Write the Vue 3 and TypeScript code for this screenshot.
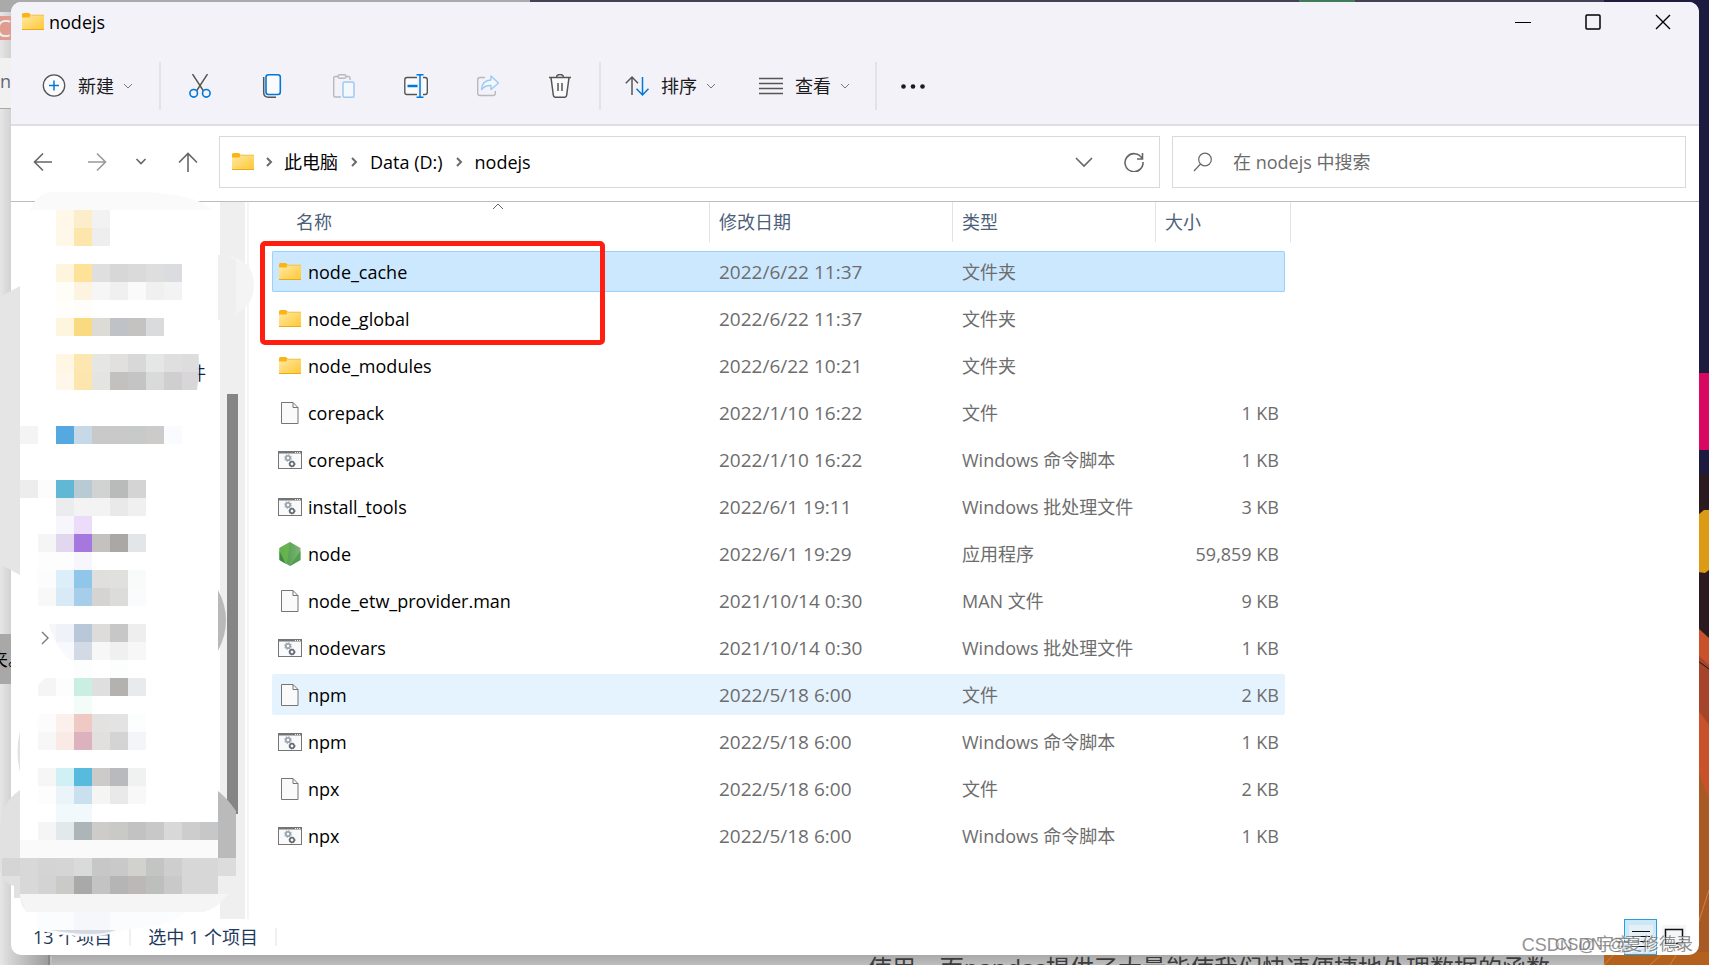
<script setup lang="ts">
import { ref } from 'vue'

type Kind = 'folder' | 'file' | 'script' | 'node'
interface Entry { name: string; date: string; type: string; size: string; kind: Kind; state?: 'selected' | 'hover' }

const entries: Entry[] = [
  { name: 'node_cache', date: '2022/6/22 11:37', type: '文件夹', size: '', kind: 'folder', state: 'selected' },
  { name: 'node_global', date: '2022/6/22 11:37', type: '文件夹', size: '', kind: 'folder' },
  { name: 'node_modules', date: '2022/6/22 10:21', type: '文件夹', size: '', kind: 'folder' },
  { name: 'corepack', date: '2022/1/10 16:22', type: '文件', size: '1 KB', kind: 'file' },
  { name: 'corepack', date: '2022/1/10 16:22', type: 'Windows 命令脚本', size: '1 KB', kind: 'script' },
  { name: 'install_tools', date: '2022/6/1 19:11', type: 'Windows 批处理文件', size: '3 KB', kind: 'script' },
  { name: 'node', date: '2022/6/1 19:29', type: '应用程序', size: '59,859 KB', kind: 'node' },
  { name: 'node_etw_provider.man', date: '2021/10/14 0:30', type: 'MAN 文件', size: '9 KB', kind: 'file' },
  { name: 'nodevars', date: '2021/10/14 0:30', type: 'Windows 批处理文件', size: '1 KB', kind: 'script' },
  { name: 'npm', date: '2022/5/18 6:00', type: '文件', size: '2 KB', kind: 'file', state: 'hover' },
  { name: 'npm', date: '2022/5/18 6:00', type: 'Windows 命令脚本', size: '1 KB', kind: 'script' },
  { name: 'npx', date: '2022/5/18 6:00', type: '文件', size: '2 KB', kind: 'file' },
  { name: 'npx', date: '2022/5/18 6:00', type: 'Windows 命令脚本', size: '1 KB', kind: 'script' },
]

const query = ref('')

// Censor mosaic: [top, left, colours of consecutive 18px cells]
const mosaicRows: [number, number, string][] = [
  [210, 56, 'fff8e8 fdeecb f2f2f2'],
  [228, 56, 'fff8e8 fde6ac eeeeee'],
  [264, 56, 'fff5de ffe29a dfdfdf d7d7d7 dadada dedede dadcdf'],
  [282, 56, 'fffdf7 fdf3e1 f6f6f6 f0f0f0 fafafa f0f0f0 f3f3f3'],
  [300, 56, 'fffefa fffdf9'],
  [318, 56, 'fef5df fada80 dcdbd6 bfc3c7 c4c3c1 dadbdd'],
  [426, 20, 'f4f4f4 ffffff 55a8e0 c7d9e6 c9c9c9 c9c9c9 c8cac9 cdcbc9 f9fbff'],
  [480, 20, 'ededed fcfcfc 61b8d4 b8cbd5 d1d3d2 b8bbba d4d4d4'],
  [498, 56, 'ebecee f3f3f3 f3f3f3 e9e9e9 f0f0f0'],
  [516, 56, 'f8f6fd ebdcf9'],
  [534, 38, 'f5f5f5 e1d7ef a678df c3c2c0 a9a8a6 e2e6e9'],
  [552, 38, 'fdfdfd fdfdfd f8f6fd'],
  [570, 38, 'fcfcfc dceef9 90c6e9 e0dfdd e0e0df f8fbfa'],
  [588, 38, 'f8f8f8 d8eaf6 a6cdea d6d4d2 dcdcda f9fbfd'],
  [660, 74, 'fcfefd ffffff fcfefd'],
  [696, 74, 'f4fcfa'],
  [714, 38, 'fcfcfc fcf0ec efc9c4 e3e2e1 e3e3e3 fbfefd'],
  [732, 38, 'f7f7f7 faeae6 ddb2bf e1e0de d4d4d4 f3f5f8'],
  [768, 38, 'f6f6f6 cff0f5 58badc cdcbc9 b9babd f0f2f1'],
  [786, 38, 'fdfdfd ebf5f9 cae0ee f5f5f3 e9e9e9 f8f8f8'],
  [804, 56, 'f2f9fd f2f9fd'],
  [822, 38, 'f5f5f5 e1e9ea aeb5b9 cecccb c9c9c7 c2c2c2 c8c8c8 d8d8d8 cdcdcd c6c7c9'],
  [840, 20, 'fafafa fafafa fafafa fafafa fafafa fafafa fafafa fafafa fafafa fafafa fafafa'],
  [858, 2, 'd5d5d5 d8d8d8 d4d4d4 d5d5d5 d8dbd9 c7c7c8 c9c9c9 d1d1ce c3c5c4 cecece d7d7d7 d7d7d7 dcdcdc'],
  [876, 20, 'd8d8d8 d3d3d3 cacbc9 a9a9a9 c3c3c3 b5b5b5 bbb8b6 bdbfbd c9c9c9 d7d7d7 d7d7d7'],
]
const clippedRows: [number, number, string][] = [
  [354, 56, 'fff6e3 fde7b1 e6e7e5 e1e0de d8d8d8 e4e7e6 dfdfe0 dddddd'],
  [372, 56, 'fff8ea fde6ae e4e4e3 c3c1bf c4c4c4 d8dbda cfcfcf d8d6d8'],
  [624, 38, 'f7f7f7 eff3f9 b9c8d9 dedcdb c7c7c7 eeeeee'],
  [642, 56, 'f8f9fc d2dae6 f7f7f7 f0f0f0 f7f7f7'],
  [678, 38, 'f5f5f5 fcfefd cbeee3 dfdfdf b3b2b0 e9eaec'],
]
const toCells = (rows: [number, number, string][]) =>
  rows.flatMap(([y, x, colors]) => colors.split(' ').map((c, i) => ({ x: x + i * 18, y, fill: '#' + c })))
const cells = toCells(mosaicRows)
const clippedCells = toCells(clippedRows)
</script>

<template>
  <div class="desktop">
    <svg width="0" height="0" class="defs" aria-hidden="true">
      <defs>
        <linearGradient id="folderFill" x1="0" y1="0" x2="1" y2="1">
          <stop offset="0" stop-color="#ffe9a6" /><stop offset="1" stop-color="#ffc832" />
        </linearGradient>
        <linearGradient id="nodeFill" x1="0" y1="0" x2="1" y2="0">
          <stop offset="0" stop-color="#449544" /><stop offset="1" stop-color="#7bb573" />
        </linearGradient>
        <symbol id="folder" viewBox="0 0 24 24">
          <path d="M1 4.5q0-1.5 1.5-1.5h5.500L9.500 4.500v4H1z" fill="#fbb415" />
          <path d="M1 7.500h7.500L9.500 5H23v15H1z" fill="url(#folderFill)" />
          <path d="M1 19.500h22" stroke="#eaaa1c" />
          <path d="M9.500 5.200H23" stroke="#f2c14c" />
        </symbol>
        <symbol id="file" viewBox="0 0 24 24">
          <path d="M3.500 1.500h11.500l5 5v16H3.500z" fill="#fafafa" stroke="#757575" />
          <path d="M15 1.500v5h5" fill="none" stroke="#757575" />
        </symbol>
        <symbol id="script" viewBox="0 0 24 24">
          <rect x=".5" y="3.500" width="23" height="17" fill="#fafafa" stroke="#757575" />
          <path d="M0 4.500h24" stroke="#757575" stroke-width="2" />
          <path d="M17 4.500h5" stroke="#eee" stroke-dasharray="1 1" />
          <circle cx="10" cy="10" r="3.200" fill="none" stroke="#b3bac2" stroke-width="1.600" stroke-dasharray="1.200 1.300" />
          <circle cx="10" cy="10" r="2.200" fill="none" stroke="#9aa5b1" stroke-width="1.800" />
          <circle cx="14" cy="16" r="2.200" fill="none" stroke="#59636d" stroke-width="1.500" />
          <circle cx="14" cy="16" r="3" fill="none" stroke="#59636d" stroke-dasharray="1 1.200" />
        </symbol>
        <symbol id="node" viewBox="0 0 24 24">
          <path d="M12 0l10.500 6v12L12 24 1.500 18V6z" fill="url(#nodeFill)" />
          <path d="M12 0L1.500 6v5l6 11 1.500-1z" fill="#6dba4d" opacity=".75" />
          <path d="M1.500 9v9l6 3.500z" fill="#3d8745" />
          <path d="M22.500 9v9L12 24z" fill="#4b984a" opacity=".8" />
        </symbol>
        <symbol id="down" viewBox="0 0 10 10"><path d="M1 3l4 4 4-4" fill="none" stroke="currentColor" /></symbol>
        <symbol id="right" viewBox="0 0 10 10"><path d="M3 1l4 4-4 4" fill="none" stroke="currentColor" stroke-width="2" /></symbol>
      </defs>
    </svg>

    <div class="behind-left" aria-hidden="true">
      <span class="badge">C</span>
      <span class="tab">n</span>
      <span class="mark">夹。</span>
    </div>
    <div class="behind-top"><i></i></div>
    <svg class="wallpaper" viewBox="0 0 105 965" preserveAspectRatio="xMaxYMin slice" aria-hidden="true">
      <rect width="105" height="965" fill="#1d1b3f" />
      <path d="M80 373h25v77H80z" fill="#d80762" />
      <path d="M80 474h25v170H80z" fill="#2b1b20" />
      <path d="M94 515l6-5h5v60l-4 3-7-1z" fill="#dd9a15" />
      <path d="M0 628h94l11 10v327H0z" fill="#c9512c" />
      <path d="M94 655l11 10v60l-11-15z" fill="#8f3d2d" opacity=".6" />
      <path d="M94 661l11 8" stroke="#201214" />
      <path d="M94 770l11 30v165H0v-20h94z" fill="#a95a24" />
      <path d="M0 952h105v13H0z" fill="#b4611d" />
      <path d="M12 952L0 965M60 952l-14 13M74 952l-8 13M105 890l-11 34" stroke="#d9803b" />
    </svg>
    <div class="behind-bottom" aria-hidden="true">
      <span>使用，而pandas提供了大量能使我们快速便捷地处理数据的函数</span>
    </div>

    <main class="window">
      <header class="chrome">
        <div class="titlebar">
          <svg class="i24"><use href="#folder" /></svg>
          <h1>nodejs</h1>
          <button class="caption" aria-label="最小化"><svg viewBox="0 0 16 16"><path d="M0 8.500h16" stroke="#000" /></svg></button>
          <button class="caption" aria-label="最大化"><svg viewBox="0 0 16 16"><rect x="1" y="1" width="14" height="14" rx="1" fill="none" stroke="#000" stroke-width="1.500" /></svg></button>
          <button class="caption" aria-label="关闭"><svg viewBox="0 0 16 16"><path d="M1 1l14 14M15 1L1 15" stroke="#000" stroke-width="1.400" /></svg></button>
        </div>
        <div class="toolbar">
          <button class="menu first">
            <svg class="i24" viewBox="0 0 24 24" fill="none"><circle cx="12" cy="11.500" r="10.700" fill="#fbfbfd" stroke="#555" stroke-width="1.300" /><path d="M12 6.500v10M7 11.500h10" stroke="#0078d7" stroke-width="1.500" /></svg>
            新建<svg class="i10"><use href="#down" /></svg>
          </button>
          <i class="sep"></i>
          <button class="tool" aria-label="剪切">
            <svg class="i24" viewBox="0 0 24 24" fill="none"><path d="M4.500 0l11 17M19.500 0l-11 17" stroke="#555" stroke-width="1.400" /><circle cx="5.700" cy="19.300" r="3.800" fill="#f3f2f9" stroke="#0078d7" stroke-width="1.600" /><circle cx="18.300" cy="19.300" r="3.800" fill="#f3f2f9" stroke="#0078d7" stroke-width="1.600" /></svg>
          </button>
          <button class="tool" aria-label="复制">
            <svg class="i24" viewBox="0 0 24 24" fill="none"><path d="M3.700 3v15.500q0 4.700 4.700 4.700H16" stroke="#555" stroke-width="1.500" /><rect x="6" y=".8" width="14.300" height="19.700" rx="2.500" fill="#fbfbfd" stroke="#0078d7" stroke-width="1.600" /></svg>
          </button>
          <button class="tool" aria-label="粘贴" disabled>
            <svg class="i24" viewBox="0 0 24 24" fill="none"><path d="M9 23H3Q1.700 23 1.700 21.500V4Q1.700 2.500 3.200 2.500H6M14 2.500h2.500Q18 2.500 18 4v2" stroke="#b8b8be" stroke-width="1.400" /><rect x="6" y=".8" width="8" height="3.400" rx="1.700" stroke="#b8b8be" stroke-width="1.400" /><rect x="11" y="8" width="11" height="15.200" rx="1.500" fill="#f3f8fd" stroke="#9ccaf0" stroke-width="1.500" /></svg>
          </button>
          <button class="tool" aria-label="重命名">
            <svg class="i24" viewBox="0 0 24 24" fill="none"><path d="M13 3.500H3Q.8 3.500.8 5.800v12.400q0 2.300 2.200 2.300h10M19 3.500h2q2.300 0 2.300 2.300v12.400q0 2.300-2.300 2.300h-2" fill="#fbfbfd" stroke="#555" stroke-width="1.400" /><path d="M3.500 12h10" stroke="#0078d7" stroke-width="2.400" /><path d="M16 .8v22.400M12.500.8h7M12.500 23.200h7" stroke="#0078d7" stroke-width="1.500" /></svg>
          </button>
          <button class="tool" aria-label="共享" disabled>
            <svg class="i24" viewBox="0 0 24 24" fill="none"><path d="M9 3.500H4Q1.700 3.500 1.700 5.800v13.400q0 2.300 2.300 2.300h13q2.300 0 2.300-2.300V17" stroke="#b8b8be" stroke-width="1.400" /><path d="M15 2l7.500 7L15 15.500v-4q-6-.5-9.500 4Q6 6.500 15 6z" fill="#f3f8fd" stroke="#9ccaf0" stroke-width="1.400" stroke-linejoin="round" /></svg>
          </button>
          <button class="tool" aria-label="删除">
            <svg class="i24" viewBox="0 0 24 24" fill="none" stroke="#555" stroke-width="1.500"><path d="M3 3.500L5.300 21q.3 2.200 2.300 2.200h8.800q2 0 2.300-2.200L21 3.500" fill="#fbfbfd" /><path d="M1 3.500h22M8.500 3.500q0-3 3.500-3t3.500 3M10 9v8M14 9v8" /></svg>
          </button>
          <i class="sep"></i>
          <button class="menu sort">
            <svg class="i24" viewBox="0 0 24 24" fill="none" stroke-width="1.500"><path d="M7 21V3M.8 9.200L7 3l6 6.200" stroke="#555" /><path d="M17.500 3v18M11.500 14.800l6 6.200 6-6.200" stroke="#0078d7" /></svg>
            排序<svg class="i10"><use href="#down" /></svg>
          </button>
          <button class="menu">
            <svg class="i24" viewBox="0 0 24 24" stroke="#555" stroke-width="1.400"><path d="M0 4.500h24M0 9.500h24M0 14.500h24M0 19.500h24" /></svg>
            查看<svg class="i10"><use href="#down" /></svg>
          </button>
          <i class="sep"></i>
          <button class="tool more" aria-label="更多">
            <svg class="i24" viewBox="0 0 24 24" fill="#1b1b1b"><circle cx="2.500" cy="12.500" r="2.300" /><circle cx="12" cy="12.500" r="2.300" /><circle cx="21.500" cy="12.500" r="2.300" /></svg>
          </button>
        </div>
      </header>

      <nav class="navrow" aria-label="地址">
        <div class="arrows">
          <button aria-label="后退"><svg viewBox="0 0 20 20"><path d="M19 10H2M10 1.500L1.500 10l8.500 8.500" /></svg></button>
          <button aria-label="前进" class="dim"><svg viewBox="0 0 20 20"><path d="M1 10h17M10 1.500l8.500 8.500-8.500 8.500" /></svg></button>
          <button aria-label="最近的位置" class="recent"><svg viewBox="0 0 20 20"><path d="M5.500 7l4.500 4.500L14.500 7" /></svg></button>
          <button aria-label="上移"><svg viewBox="0 0 20 20"><path d="M10 20V2M1 10.500L10 1.500l9 9" /></svg></button>
        </div>
        <div class="address">
          <svg class="i24"><use href="#folder" /></svg>
          <svg class="i10 crumb"><use href="#right" /></svg><a href="#pc">此电脑</a>
          <svg class="i10 crumb"><use href="#right" /></svg><a href="#d">Data (D:)</a>
          <svg class="i10 crumb"><use href="#right" /></svg><a href="#nodejs">nodejs</a>
          <button class="drop" aria-label="历史记录"><svg viewBox="0 0 20 20"><path d="M2 6l8 8 8-8" /></svg></button>
          <button aria-label="刷新"><svg viewBox="0 0 20 20"><path d="M18 6.500A9 9 0 1 0 19 10M18.500 1v6H13" /></svg></button>
        </div>
        <label class="search">
          <svg viewBox="0 0 20 20"><circle cx="12" cy="7.500" r="6.300" /><path d="M7.500 12L1 19" /></svg>
          <input v-model="query" type="search" placeholder="在 nodejs 中搜索" aria-label="搜索" />
        </label>
      </nav>

      <div class="body">
        <aside class="pane">
          <div class="track"><div class="thumb"></div></div>
        </aside>
        <section class="list">
          <svg class="sorted" viewBox="0 0 12 8"><path d="M1 7l5-5 5 5" fill="none" stroke="#666" /></svg>
          <table>
            <thead>
              <tr><th scope="col">名称</th><th scope="col">修改日期</th><th scope="col">类型</th><th scope="col">大小</th></tr>
            </thead>
            <tbody>
              <tr v-for="(e, i) in entries" :key="i" :class="e.state">
                <td class="name"><svg class="i24"><use :href="'#' + e.kind" /></svg>{{ e.name }}</td>
                <td class="date">{{ e.date }}</td>
                <td>{{ e.type }}</td>
                <td class="size">{{ e.size }}</td>
              </tr>
            </tbody>
          </table>
          <div class="highlight"></div>
        </section>
      </div>

      <footer class="status">
        <span>13 个项目</span><i></i><span>选中 1 个项目</span><i></i>
        <div class="views">
          <button class="on" aria-label="详细信息"><svg viewBox="0 0 24 24"><path d="M3 6.500h18M3 11.500h18M3 16.500h18M3 21.500h18" stroke="#111" /></svg></button>
          <button aria-label="大图标"><svg viewBox="0 0 24 24"><rect x="3.500" y="4.500" width="17" height="14" fill="none" stroke="#111" stroke-width="1.500" /><path d="M7 22h10" stroke="#111" /></svg></button>
        </div>
      </footer>
    </main>

    <svg class="mosaic" width="260" height="965" viewBox="0 0 260 965" aria-hidden="true">
      <defs>
        <clipPath id="patch"><path d="M0 340h197q4 25 0 50H0zM46 610h110v50H70q-20-18-24-50zM38 685l7-7h110v18H38z" /></clipPath>
      </defs>
      <text x="188" y="380" class="ghost">件</text>
      <path d="M42 632l6 6-6 6" fill="none" stroke="#777" stroke-width="1.400" />
      <path d="M30 210Q38 192 52 192h95q52 3 65 18z" fill="#fafafa" />
      <path d="M0 297l20-11v289l-20-11z" fill="#e5e5e5" />
      <path d="M218 255h6q30 4 30 30t-30 33l-6 2z" fill="#f4f4f4" /><path d="M218 255h6q6 1 12 5v53q-8 6-18 7z" fill="#efefef" />
      <path d="M218 590q16 30 0 61z" fill="#b9b9b9" />
      <path d="M20 731q-5 20 0 41z" fill="#e2e2e2" />
      <path d="M20 790Q0 803 0 830v40q4 14 14 16v12h6z" fill="#e1e1e1" />
      <path d="M218 791q27 23 27 67 0 30-40 53H26q-6-6-6-17h198z" fill="#efefef" />
      <path d="M218 791q10 8 18 20v47h-18z" fill="#bababa" />
      <rect v-for="(c, i) in cells" :key="i" :x="c.x" :y="c.y" width="18" height="18" :fill="c.fill" />
      <g clip-path="url(#patch)">
        <rect v-for="(c, i) in clippedCells" :key="i" :x="c.x" :y="c.y" width="18" height="18" :fill="c.fill" />
      </g>
      <path d="M20 894h208q-10 14-24 18H26z" fill="#f5f5f5" />
      <path d="M38 912h148q-20 16-56 17-40 14-92 1z" fill="#fbfcfd" />
      <path d="M74 912h36v22q-20 4-36 2z" fill="#f6f7fa" />
      <path d="M50 930h66q-20 8-66 0z" fill="#d4d8e0" />
    </svg>

    <div class="watermark back">CSDN @宇宝</div>
    <div class="watermark front">CSDN @夏修德录</div>
  </div>
</template>

<style>
html, body { margin: 0; overflow: hidden; }
</style>

<style scoped>
* { box-sizing: border-box; }
.desktop {
  position: relative; display: flex; height: 100vh; padding: 2px 10px 10px 11px; overflow: hidden;
  background: #bdbdbd; font: 18px/24px "Open Sans", "Noto Sans CJK SC", sans-serif; color: #000;
}
.defs { position: absolute; }
button { border: 0; padding: 0; background: none; font: inherit; color: inherit; display: flex; align-items: center; justify-content: center; }
a { color: inherit; text-decoration: none; }
svg { flex: none; }
.i24 { width: 24px; height: 24px; }
.i10 { width: 10px; height: 10px; }

.behind-left { position: absolute; left: 0; top: 0; bottom: 0; width: 50px; background: linear-gradient(90deg, #e6e6e6, #d2d2d2 11px, #999 50px); border-right: 2px solid #888; overflow: hidden; }
.behind-left span { position: absolute; left: 0; width: 11px; overflow: hidden; white-space: nowrap; direction: rtl; }
.behind-left .badge { top: 16px; height: 24px; background: #e09c90; color: #eee; font-size: 24px; }
.behind-left .tab { top: 58px; height: 51px; line-height: 46px; background: #f1f1f1; color: #667; border-bottom: 1px solid #aaa; }
.behind-left .mark { top: 634px; height: 50px; line-height: 50px; background: #a8a8a8; direction: ltr; text-indent: -10px; }
.behind-top { position: absolute; left: 0; right: 0; top: 0; height: 12px; background: linear-gradient(90deg, #aaa 31%, #463f55 31%); }
.behind-top i { position: absolute; left: 76%; width: 56px; height: 2px; background: #3f7a59; }
.wallpaper { position: absolute; right: 0; top: 0; width: 105px; height: 100%; }
.behind-bottom { position: absolute; left: 52px; right: 105px; bottom: 0; height: 12px; overflow: hidden; background: linear-gradient(#a5a5a5, #bdbdbd); }
.behind-bottom span { display: block; text-align: right; padding-right: 54px; font-size: 24px; line-height: 30px; color: #3c3c3c; white-space: nowrap; }

.window { position: relative; flex: 1; display: flex; flex-direction: column; min-width: 0; background: #fff; border-radius: 10px; overflow: hidden; }
.desktop::before { content: ""; position: absolute; left: 9px; right: 9px; top: 1px; bottom: 9px; border-radius: 12px; background: #a3a3a3; }
.chrome { background: #f3f2f9; border-bottom: 2px solid #dfdee6; }
.titlebar { display: flex; align-items: center; height: 40px; padding: 0 1px 0 10px; }
h1 { flex: 1; margin: 0 0 0 4px; font-size: 18px; font-weight: 400; }
.caption { width: 70px; height: 40px; }
.caption svg { width: 16px; height: 16px; }
.toolbar { display: flex; align-items: center; height: 82px; padding: 6px 0 0 1px; color: #1b1b1b; }
.menu { height: 48px; padding: 0 19px 0 24px; white-space: nowrap; }
.menu.first { padding: 0 20px 0 30px; }
.menu.sort { padding-left: 21px; }
.menu .i24 { margin-right: 12px; }
.menu .i10 { margin-left: 9px; color: #777; }
.sep { width: 2px; height: 48px; margin: 0 3px 0 6px; background: #e3e2e9; }
.tool + .sep { margin-left: 3px; }
.tool { width: 72px; height: 48px; }
.tool.more { width: 66px; }

.navrow { display: flex; align-items: center; gap: 12px; height: 76px; padding: 0 13px 4px 20px; border-bottom: 1px solid #bcbcbc; }
.navrow button svg, .search svg { width: 20px; height: 20px; fill: none; stroke: #666; stroke-width: 1.6; }
.arrows { display: flex; gap: 30px; width: 176px; }
.arrows button { width: 24px; height: 24px; }
.arrows .recent { margin: 0 -7px 0 -10px; }
.arrows .dim svg { stroke: #999; }
.address, .search { display: flex; align-items: center; height: 52px; border: 1px solid #d9d9d9; }
.address { flex: 1; padding: 0 15px 0 11px; }
.crumb { margin: 0 10px 0 9px; color: #6b6b6b; }
.address a + .crumb { margin: 0 11px; }
.address button { width: 20px; height: 24px; }
.address .drop { margin-left: auto; margin-right: 30px; }
.search { flex: 0 1 514px; padding-left: 20px; gap: 20px; }
.search svg { stroke-width: 1.2; }
.search input { flex: 1; min-width: 0; border: 0; padding: 0; outline: 0; background: none; font: inherit; }
.search input::placeholder { color: #6b6b6b; opacity: 1; }

.body { display: flex; flex: 1; min-height: 0; }
.pane { display: flex; justify-content: flex-end; width: 238px; padding-right: 2px; border-right: 2px solid #f5f5f5; }
.track { width: 25px; padding: 192px 7px 0; background: #efefef; }
.thumb { height: 420px; background: #858585; }
.list { position: relative; flex: 1; padding-left: 23px; }
.sorted { position: absolute; left: 243px; top: 0; width: 12px; height: 8px; }
table { display: block; }
thead { display: block; }
tbody { display: flex; flex-direction: column; gap: 6px; margin-top: 9px; }
tr { display: grid; grid-template-columns: 438px 243px 203px 129px; align-items: center; width: max-content; }
thead tr { grid-template-columns: 438px 243px 203px 135px; }
tbody tr { height: 41px; border-radius: 2px; }
th { height: 40px; padding: 0 9px; line-height: 40px; border-right: 1px solid #e3e3e3; font-weight: 400; text-align: left; color: #4c607a; }
th:first-child { padding-left: 24px; }
td { padding: 0 9px; color: #6d6d6d; white-space: nowrap; }
.name { display: flex; align-items: center; gap: 6px; padding: 0 6px; color: #000; }
.date { font-size: 19px; }
.size { text-align: right; padding-right: 6px; }
.selected { background: #cce8ff; box-shadow: inset 0 0 0 1px #99d1ff; }
.hover { background: #e5f3ff; }
.highlight { position: absolute; left: 11px; top: 39px; width: 345px; height: 104px; border: 5px solid #ff1e10; border-radius: 5px; pointer-events: none; }

.status { display: flex; align-items: center; height: 36px; padding-left: 22px; color: #1e395b; }
.status i { width: 2px; height: 18px; margin: 0 17px; background: #f0f0f0; }
.views { display: flex; gap: 0; margin: 0 9px 0 auto; }
.views button { width: 33px; height: 36px; }
.views svg { width: 24px; height: 24px; background: #f4f6f7; }
.views .on { background: #cce8f8; border: 1px solid #26a0da; }
.views .on svg { background: #e4eff6; }

.mosaic { position: absolute; left: 0; top: 0; }
.ghost { font-size: 18px; fill: #13233c; }
.watermark { position: absolute; bottom: 8px; line-height: 24px; white-space: nowrap; color: #777; opacity: .8; text-shadow: 1px 1px #fff; font-family: "Liberation Sans", "Noto Sans CJK SC", sans-serif; }
.back { right: 77px; }
.front { right: 16px; font-size: 17px; }
</style>
